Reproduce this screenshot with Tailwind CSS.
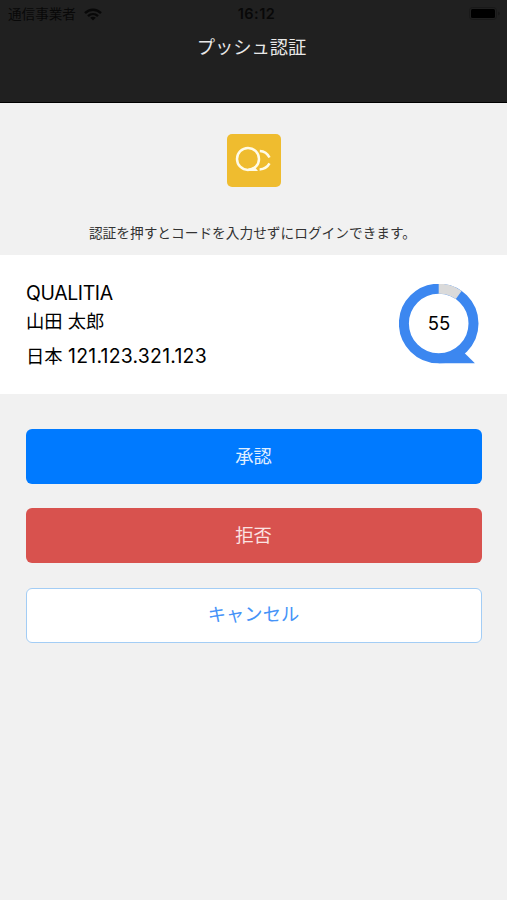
<!DOCTYPE html>
<html lang="ja">
<head>
    <meta charset="UTF-8">
    <meta name="viewport" content="width=device-width, initial-scale=1.0">
    <title>プッシュ認証</title>
    <script src="https://cdn.jsdelivr.net/npm/@tailwindcss/browser@4"></script>
</head>
<body class="min-h-screen bg-[#f1f1f1] font-[Inter,'Noto_Sans_CJK_JP',sans-serif] text-black">
    <!-- Status bar and title -->
    <header class="h-[103px] bg-[#202020] border-b border-black">
        <div class="grid grid-cols-3 items-center h-7 pl-2 pr-1.5 text-[#080808]">
            <div class="flex items-center gap-2">
                <span class="text-[13.6px] leading-none pt-px">通信事業者</span>
                <svg class="w-[18px] h-[13px]" viewBox="0 0 18 13" fill="none" stroke="currentColor" stroke-width="2.4">
                    <path d="M1 5.2C5.5 .6 12.5 .6 17 5.2"/>
                    <path d="M4 8.2c2.9-2.8 7.1-2.8 10 0"/>
                    <path d="M9 12.6 6.2 9.8c1.6-1.4 4-1.4 5.6 0z" fill="currentColor" stroke="none"/>
                </svg>
            </div>
            <span class="pl-1 text-center text-[14.5px] leading-none font-semibold tracking-[0.5px]">16:12</span>
            <svg class="w-[32px] h-[14px] justify-self-end" viewBox="0 0 32 14">
                <rect x=".5" y=".5" width="27" height="12" rx="3" fill="none" stroke="#191919"/>
                <rect x="2" y="2" width="24" height="9" rx="1.5" fill="#000"/>
                <path d="M29.5 4.5q2 2 0 4z" fill="#111"/>
            </svg>
        </div>
        <h1 class="mt-[5px] pr-1 text-center text-[18.3px] leading-7 text-[#e8e8e8]">プッシュ認証</h1>
    </header>

    <main>
        <section class="flex flex-col items-center h-[152px] pt-[31px]">
            <svg class="w-[54px] h-[53px]" viewBox="0 0 54 53" fill="none">
                <rect width="54" height="53" rx="5" fill="#efbc2f"/>
                <g stroke="#fffbe8" stroke-width="2.5">
                    <circle cx="21" cy="24.9" r="11"/>
                    <path d="M32.8 17c4.200.200 7.800 2.700 9.700 6.500"/>
                    <path d="M32.600 35.400c4.300-.200 8-2.500 9.900-6"/>
                </g>
                <path d="M21 34.700 27.500 32.800 31 37.100H21z" fill="#fffbe8"/>
            </svg>
            <p class="mt-9 pr-0.5 text-[13.7px] leading-5 text-[#333] whitespace-nowrap">認証を押すとコードを入力せずにログインできます。</p>
        </section>

        <!-- Login request -->
        <section class="flex justify-between h-[139px] bg-white pl-[26px] pr-7">
            <div class="pt-6 text-[19.4px] leading-7 whitespace-nowrap">
                <div class="tracking-[-0.35px]">QUALITIA</div>
                <div class="text-[18.3px]">山田 太郎</div>
                <div class="mt-[7px]"><span class="text-[18.3px]">日本</span> <span class="tracking-[0.25px]">121.123.321.123</span></div>
            </div>
            <div class="relative w-20 h-20 mt-[29px]">
                <svg class="w-20 h-20" viewBox="0 0 80 80" fill="none">
                    <circle cx="39.7" cy="39.5" r="34.8" stroke="#3c87f0" stroke-width="10"/>
                    <path d="M39.7 4.7A34.8 34.8 0 0 1 59.7 11" stroke="#dadada" stroke-width="10"/>
                    <path d="M39.7 79.3H75.9L65.5 69 60 65.5 39.7 74.3z" fill="#3c87f0"/>
                </svg>
                <span class="absolute inset-0 flex items-center justify-center text-[18.5px]">55</span>
            </div>
        </section>

        <!-- Actions -->
        <div class="flex flex-col gap-[24.3px] pt-[35px] px-[25.5px] text-[18.3px]">
            <button class="h-[55px] rounded-md bg-[#007aff] text-[#e0efff]">承認</button>
            <button class="h-[55px] rounded-md bg-[#d8524e] text-[#fbe3e2]">拒否</button>
            <button class="h-[55px] rounded-md border border-[#a3cdf5] bg-white text-[#4593f8]">キャンセル</button>
        </div>
    </main>
</body>
</html>
